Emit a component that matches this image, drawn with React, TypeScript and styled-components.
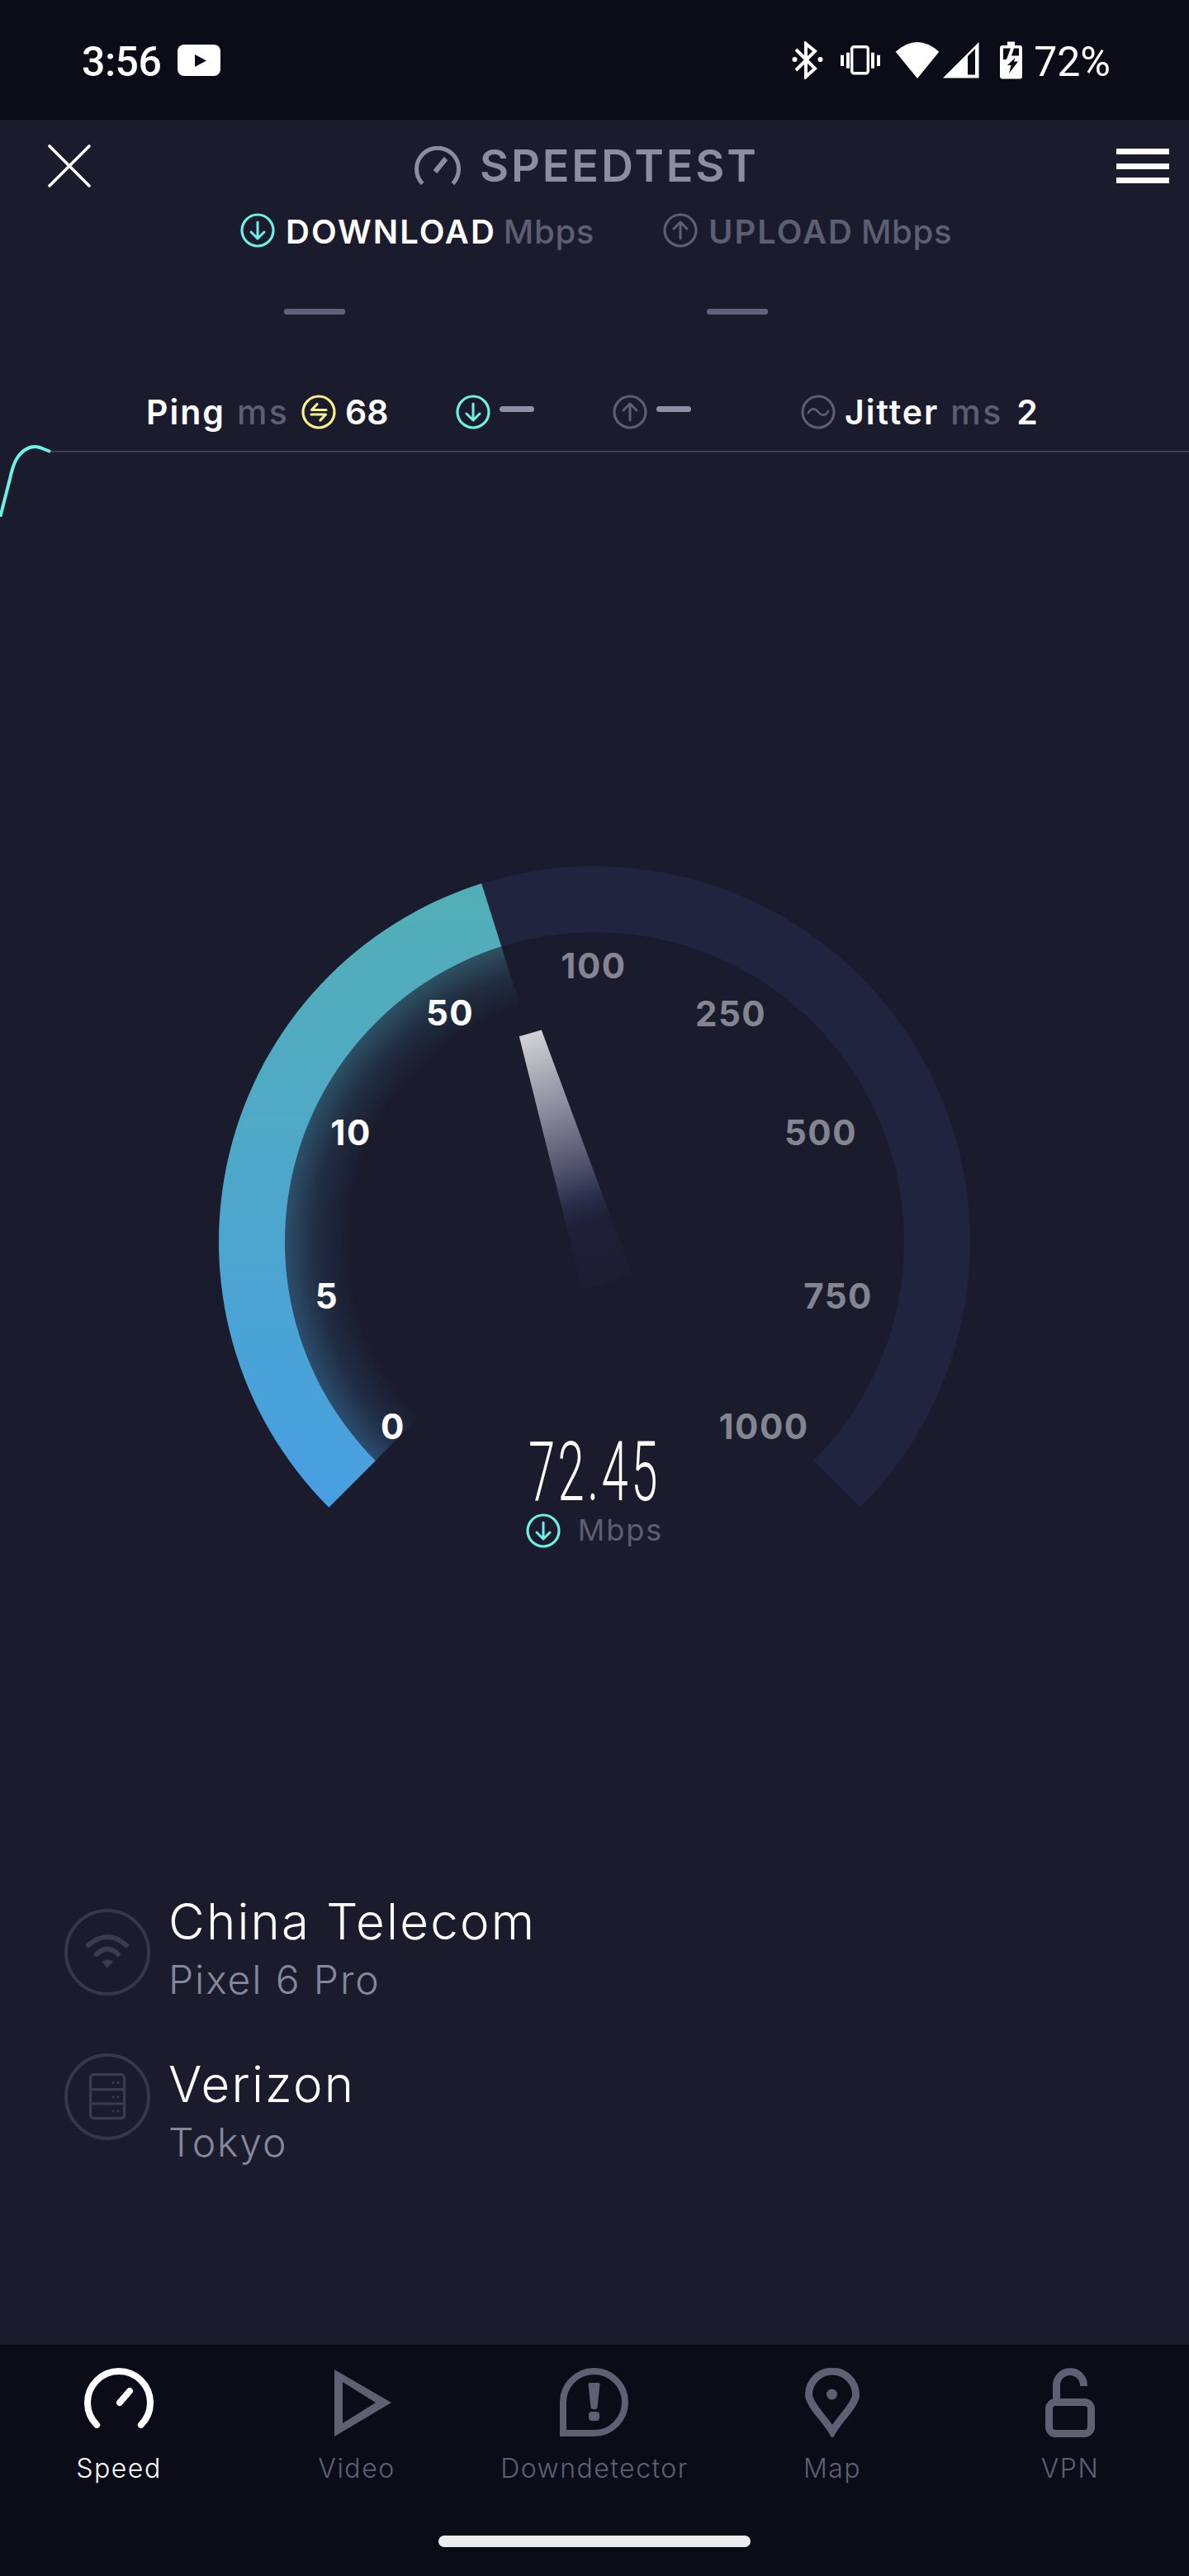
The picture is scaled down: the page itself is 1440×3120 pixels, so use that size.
import React from "react";
import styled, { createGlobalStyle } from "styled-components";

const Global = createGlobalStyle`
  html, body { margin: 0; padding: 0; background: #1a1c2e; }
  * { box-sizing: border-box; }
`;

const UI = `"Inter", "Noto Sans", sans-serif`;
const CLOCK = `"Roboto", "Liberation Sans", sans-serif`;
const MUTED = "#5c5e72";
const SOFT = "#8b8da0";
const NAV_OFF = "#5f6073";

const Page = styled.div`
  width: 1440px;
  height: 3120px;
  background: #1a1c2e;
  display: flex;
  flex-direction: column;
  font-family: ${UI};
  color: #fff;
  overflow: hidden;
`;

/* status bar */
const StatusBar = styled.header`
  height: 145px;
  flex: none;
  background: #0a0c18;
  display: flex;
  align-items: center;
  padding: 0 95px 0 99px;
`;
const Clock = styled.span`
  font: 500 50px/1 ${CLOCK};
  margin-top: 4px;
  letter-spacing: -0.5px;
`;
const StatusPercent = styled.span`
  font: 400 50px/1 ${CLOCK};
  margin-top: 4px;
  margin-left: 13px;
`;
const StatusRight = styled.div`
  margin-left: auto;
  display: flex;
  align-items: center;
`;
const StatusIcon = styled.svg<{ $gap?: number }>`
  display: block;
  flex: none;
  margin-left: ${(p) => p.$gap ?? 0}px;
`;

/* toolbar */
const Toolbar = styled.div`
  height: 112px;
  flex: none;
  display: grid;
  grid-template-columns: 444px auto 1fr;
  align-items: center;
  padding: 0 24px 0 58px;
`;
const TitleWrap = styled.div`
  display: flex;
  align-items: center;
  gap: 23px;
`;
const TitleText = styled.h1`
  margin: 0;
  font: 600 54px/1 ${UI};
  color: ${SOFT};
  letter-spacing: 2.9px;
`;
const MenuButton = styled.div`
  justify-self: end;
  width: 64px;
  display: flex;
  flex-direction: column;
  gap: 10.5px;
`;
const MenuBar = styled.span`
  display: block;
  height: 7px;
  background: #fff;
`;

/* tabs */
const Tabs = styled.div`
  display: grid;
  grid-template-columns: 512px 1fr;
  padding-left: 291px;
  height: 42px;
  flex: none;
`;
const Tab = styled.div`
  display: flex;
  align-items: center;
  gap: 13px;
`;
const TabLabel = styled.span<{ $on?: boolean }>`
  font: 600 40px/1 ${UI};
  letter-spacing: 2px;
  margin-top: 4px;
  color: ${(p) => (p.$on ? "#fff" : MUTED)};
  b {
    font-weight: 500;
    letter-spacing: 0.7px;
    color: ${MUTED};
    margin-left: 9px;
  }
`;
const CircleIcon = styled.svg`
  display: block;
  flex: none;
`;

const Dashes = styled.div`
  display: flex;
  gap: 438px;
  padding-left: 344px;
  margin-top: 75px;
  flex: none;
`;
const PendingDash = styled.span`
  display: block;
  width: 74px;
  height: 7px;
  border-radius: 3px;
  background: #62637a;
`;

/* stats */
const Stats = styled.div`
  display: grid;
  grid-template-columns: 375px 190px 228px 1fr;
  padding-left: 177px;
  margin-top: 97px;
  height: 42px;
  flex: none;
`;
const StatGroup = styled.div`
  display: flex;
  align-items: center;
`;
const StatName = styled.span<{ $gap?: number }>`
  font: 600 41px/1 ${UI};
  letter-spacing: 2px;
  color: #fff;
  margin-left: ${(p) => p.$gap ?? 0}px;
`;
const StatUnit = styled.span`
  font: 500 41px/1 ${UI};
  letter-spacing: 2.5px;
  color: ${MUTED};
  margin: 0 16px 0 14px;
  width: 62px;
`;
const StatValue = styled.span<{ $gap: number }>`
  font: 600 41px/1 ${UI};
  color: #fff;
  margin-left: ${(p) => p.$gap}px;
`;
const StatDash = styled.span`
  display: block;
  width: 42px;
  height: 7px;
  border-radius: 4px;
  background: #8f90a8;
  margin: -7px 0 0 11px;
`;

const GraphStrip = styled.svg`
  display: block;
  flex: none;
  margin-top: 10px;
`;

/* gauge */
const GaugeWrap = styled.section`
  position: relative;
  width: 960px;
  height: 810px;
  flex: none;
  margin: 404px auto 0;
`;
const GaugeSvg = styled.svg`
  display: block;
`;
const GaugeLabel = styled.text<{ $on?: boolean }>`
  font: 700 42px ${UI};
  letter-spacing: 1.5px;
  text-anchor: middle;
  fill: ${(p) => (p.$on ? "#fff" : "#848590")};
`;
const Readout = styled.div`
  position: absolute;
  left: 0;
  right: 0;
  top: 703px;
  display: flex;
  flex-direction: column;
  align-items: center;
`;
const ReadoutValue = styled.span`
  font: 300 100px/100px ${CLOCK};
  letter-spacing: 6px;
  transform: scaleX(0.58);
`;
const ReadoutUnit = styled.div`
  display: flex;
  align-items: center;
  gap: 21px;
`;
const ReadoutText = styled.span`
  font: 400 36px/1 ${UI};
  letter-spacing: 2px;
  color: ${MUTED};
  margin-top: -3px;
`;

/* connection info */
const Networks = styled.div`
  margin-top: 452px;
  padding-left: 78px;
  display: flex;
  flex-direction: column;
  gap: 55px;
  flex: none;
`;
const NetworkRow = styled.div`
  display: flex;
  align-items: flex-start;
  gap: 22px;
`;
const NetworkBadge = styled.svg<{ $top: number }>`
  display: block;
  flex: none;
  margin-top: ${(p) => p.$top}px;
`;
const NetworkText = styled.div`
  display: flex;
  flex-direction: column;
`;
const NetworkName = styled.span`
  font: 300 60px/70px ${UI};
  letter-spacing: 2.2px;
  color: #fff;
`;
const NetworkDetail = styled.span`
  font: 300 48px/72px ${UI};
  letter-spacing: 1.9px;
  color: #85879a;
`;

/* bottom nav */
const BottomNav = styled.nav`
  margin-top: auto;
  height: 280px;
  flex: none;
  background: #0a0c18;
  padding-top: 28px;
  display: flex;
  flex-direction: column;
`;
const NavItems = styled.div`
  display: grid;
  grid-template-columns: repeat(5, 1fr);
`;
const NavItem = styled.div`
  display: flex;
  flex-direction: column;
  align-items: center;
`;
const NavIcon = styled.svg`
  display: block;
  height: 84px;
  width: 100px;
`;
const NavLabel = styled.span<{ $on?: boolean }>`
  font: 300 32px/40px ${UI};
  letter-spacing: 1.5px;
  margin-top: 18px;
  color: ${(p) => (p.$on ? "#fff" : NAV_OFF)};
`;
const HomeBar = styled.div`
  width: 378px;
  height: 14px;
  border-radius: 7px;
  background: #ececec;
  margin: 61px auto 0;
`;

/* geometry */
const CX = 720;
const CY = 1504;
const polar = (r: number, deg: number) => {
  const a = (deg * Math.PI) / 180;
  return `${(CX + r * Math.sin(a)).toFixed(2)} ${(CY - r * Math.cos(a)).toFixed(2)}`;
};
const ring = (r0: number, r1: number, a: number, b: number) =>
  `M${polar(r1, a)} A${r1} ${r1} 0 0 1 ${polar(r1, b)} L${polar(r0, b)} A${r0} ${r0} 0 0 0 ${polar(r0, a)} Z`;

const START = -135;
const NOW = -17.5;
const END = 135;

const TICKS: { t: string; x: number; y: number; on?: boolean }[] = [
  { t: "0", x: 476, y: 1743, on: true },
  { t: "5", x: 396, y: 1585, on: true },
  { t: "10", x: 425, y: 1387, on: true },
  { t: "50", x: 545, y: 1242, on: true },
  { t: "100", x: 719, y: 1185 },
  { t: "250", x: 885, y: 1243 },
  { t: "500", x: 994, y: 1387 },
  { t: "750", x: 1015, y: 1585 },
  { t: "1000", x: 925, y: 1743 },
];

const ArrowCircle = ({ up, color, size = 42 }: { up?: boolean; color: string; size?: number }) => (
  <CircleIcon width={size} height={size} viewBox="0 0 42 42" fill="none" stroke={color}>
    <circle cx="21" cy="21" r="19" strokeWidth="3.2" />
    <g strokeWidth="3" strokeLinecap="round" strokeLinejoin="round">
      {up ? (
        <path d="M21 31V11M13 19l8-8 8 8" />
      ) : (
        <path d="M21 11v20M13 23l8 8 8-8" />
      )}
    </g>
  </CircleIcon>
);

const PingIcon = () => (
  <CircleIcon width={42} height={42} viewBox="0 0 42 42" fill="none" stroke="#fdf088" strokeLinecap="round" strokeLinejoin="round">
    <circle cx="21" cy="21" r="19" strokeWidth="3.2" />
    <path strokeWidth="3.2" d="M30 18.5H12.5L19 11.5M12 24H29.5L23 31" />
  </CircleIcon>
);

const JitterIcon = () => (
  <CircleIcon width={42} height={42} viewBox="0 0 42 42" fill="none" stroke={MUTED}>
    <circle cx="21" cy="21" r="19" strokeWidth="3" />
    <path strokeWidth="2.6" strokeLinecap="round" d="M9 22c3-6 8-6 12-1s9 5 12-1" />
  </CircleIcon>
);

const App = () => (
  <Page>
    <Global />
    <StatusBar>
      <Clock>3:56</Clock>
      <StatusIcon $gap={20} width={52} height={38} viewBox="214 54 52 38">
        <rect x="214" y="54" width="52" height="38" rx="8" fill="#fff" />
        <path d="M235 66 L249 73.5 L235 81 Z" fill="#0a0c18" />
      </StatusIcon>
      <StatusRight>
        <StatusIcon width={38} height={46} viewBox="957 50 38 46">
          <path d="M962 60 L985 83 L974 93 V53 L985 62 L962 85" fill="none" stroke="#fff" strokeWidth="4" />
          <circle cx="960.5" cy="72" r="3" fill="#fff" />
          <circle cx="991.5" cy="72" r="3" fill="#fff" />
        </StatusIcon>
        <StatusIcon $gap={20} width={49} height={36} viewBox="1015 54 49 36" fill="#fff">
          <rect x="1029.7" y="55.7" width="19.6" height="32" rx="2.5" fill="none" stroke="#fff" strokeWidth="3.4" />
          <rect x="1016" y="65.7" width="4" height="13.3" />
          <rect x="1023" y="62.7" width="4" height="19" />
          <rect x="1053" y="62.7" width="4" height="19" />
          <rect x="1060" y="65.7" width="4" height="13.3" />
        </StatusIcon>
        <StatusIcon $gap={18} width={54} height={44} viewBox="1082 50 54 44">
          <path d="M1082.7 61.7 Q1109 38.3 1135.3 61.7 L1109 94 Z" fill="#fff" />
        </StatusIcon>
        <StatusIcon $gap={3} width={45} height={44} viewBox="1139 51 45 44">
          <path fillRule="evenodd" d="M1140 94.5 L1183.5 51 V94.5 Z M1170 68 V90.5 H1179 V59 Z" fill="#fff" />
        </StatusIcon>
        <StatusIcon $gap={25} width={28} height={46} viewBox="1209 50 28 46">
          <path d="M1218 50.5 H1227 V55 H1233 Q1236 55 1236 58 V92 Q1236 95.5 1233 95.5 H1212 Q1209 95.5 1209 92 V58 Q1209 55 1212 55 H1218 Z" fill="#fff" />
          <g fill="#0a0c18">
            <path d="M1213 58.5 H1222 L1217 72 H1213 Z" />
            <path d="M1226 58.5 H1232 V67.5 H1223 Z" />
            <path d="M1227.5 70 L1218 79 H1222.5 L1220 89 L1231 74.5 H1226 Z" />
          </g>
        </StatusIcon>
        <StatusPercent>72%</StatusPercent>
      </StatusRight>
    </StatusBar>

    <Toolbar>
      <StatusIcon width={52} height={52} viewBox="0 0 52 52">
        <path d="M2 2 L50 50 M50 2 L2 50" stroke="#fff" strokeWidth="3.6" strokeLinecap="round" />
      </StatusIcon>
      <TitleWrap>
        <StatusIcon width={56} height={48} viewBox="502 173 56 48" fill="none" stroke={SOFT}>
          <path d="M511.6 218.4 A25.5 25.5 0 1 1 548.4 218.4" strokeWidth="5" />
          <path d="M527 204 L540 188" strokeWidth="6" />
        </StatusIcon>
        <TitleText>SPEEDTEST</TitleText>
      </TitleWrap>
      <MenuButton>
        <MenuBar />
        <MenuBar />
        <MenuBar />
      </MenuButton>
    </Toolbar>

    <Tabs>
      <Tab>
        <ArrowCircle color="#6ef0e5" />
        <TabLabel $on>
          DOWNLOAD<b>Mbps</b>
        </TabLabel>
      </Tab>
      <Tab>
        <ArrowCircle up color={MUTED} />
        <TabLabel>
          UPLOAD<b>Mbps</b>
        </TabLabel>
      </Tab>
    </Tabs>

    <Dashes>
      <PendingDash />
      <PendingDash />
    </Dashes>

    <Stats>
      <StatGroup>
        <StatName>Ping</StatName>
        <StatUnit>ms</StatUnit>
        <PingIcon />
        <StatValue $gap={11}>68</StatValue>
      </StatGroup>
      <StatGroup>
        <ArrowCircle color="#6ef0e5" />
        <StatDash />
      </StatGroup>
      <StatGroup>
        <ArrowCircle up color={MUTED} />
        <StatDash />
      </StatGroup>
      <StatGroup>
        <JitterIcon />
        <StatName $gap={11}>Jitter</StatName>
        <StatUnit>ms</StatUnit>
        <StatValue $gap={2}>2</StatValue>
      </StatGroup>
    </Stats>

    <GraphStrip width={1440} height={96} viewBox="0 530 1440 96" fill="none">
      <path d="M60 546.8 H1440" stroke="#4a4b5c" strokeWidth="1.6" />
      <path
        d="M0 627 L12 580 C16 562 20 552 30 545 C36 541 42 540 48 542 L61 547"
        stroke="#6ef0e5"
        strokeWidth="4"
      />
    </GraphStrip>

    <GaugeWrap>
      <GaugeSvg width={960} height={810} viewBox="240 1030 960 810">
        <defs>
          <linearGradient id="sweep" gradientUnits="userSpaceOnUse" x1="0" y1="1060" x2="0" y2="1830">
            <stop offset="0" stopColor="#53afb5" />
            <stop offset="1" stopColor="#479fe2" />
          </linearGradient>
          <radialGradient id="glowFade" gradientUnits="userSpaceOnUse" cx={CX} cy={CY} r="376">
            <stop offset="0.79" stopColor="#fff" stopOpacity="0" />
            <stop offset="0.9" stopColor="#fff" stopOpacity="0.13" />
            <stop offset="1" stopColor="#fff" stopOpacity="0.38" />
          </radialGradient>
          <mask id="glowMask" maskUnits="userSpaceOnUse" x="240" y="1030" width="960" height="810">
            <rect x="240" y="1030" width="960" height="810" fill="url(#glowFade)" />
          </mask>
          <linearGradient id="needle" gradientUnits="userSpaceOnUse" x1="642" y1="1251" x2="735" y2="1553">
            <stop offset="0" stopColor="#d2d2d6" />
            <stop offset="0.3" stopColor="#8c8d9d" />
            <stop offset="0.55" stopColor="#4d5068" />
            <stop offset="0.67" stopColor="#2a2e4c" />
            <stop offset="0.76" stopColor="#1e2036" />
            <stop offset="1" stopColor="#1c1e32" />
          </linearGradient>
        </defs>
        <path d={ring(375, 455, NOW, END)} fill="#20243f" />
        <path d={ring(298, 376, START, NOW)} fill="url(#sweep)" mask="url(#glowMask)" />
        <path d={ring(375, 455, START, NOW)} fill="url(#sweep)" />
        <path d="M628.8 1255.3 L655.8 1247.6 L765.5 1544 L705.3 1562.4 Z" fill="url(#needle)" />
        {TICKS.map((k) => (
          <GaugeLabel key={k.t} x={k.x} y={k.y} $on={k.on}>
            {k.t}
          </GaugeLabel>
        ))}
      </GaugeSvg>
      <Readout>
        <ReadoutValue>72.45</ReadoutValue>
        <ReadoutUnit>
          <ArrowCircle color="#6ef0e5" />
          <ReadoutText>Mbps</ReadoutText>
        </ReadoutUnit>
      </Readout>
    </GaugeWrap>

    <Networks>
      <NetworkRow>
        <NetworkBadge $top={20} width={104} height={105} viewBox="78 2312 104 105" fill="none">
          <ellipse cx="130" cy="2364.5" rx="50" ry="50.5" stroke="#35374a" strokeWidth="4" />
          <g stroke="#393b4e" strokeWidth="6" strokeLinecap="round">
            <path d="M107 2356 Q130 2336 153 2356" />
            <path d="M117 2367 Q130 2354 143 2367" />
          </g>
          <path d="M123 2376 Q130 2371 137 2376 L130 2383.5 Z" fill="#393b4e" />
        </NetworkBadge>
        <NetworkText>
          <NetworkName>China Telecom</NetworkName>
          <NetworkDetail>Pixel 6 Pro</NetworkDetail>
        </NetworkText>
      </NetworkRow>
      <NetworkRow>
        <NetworkBadge $top={-2} width={104} height={105} viewBox="78 2487 104 105" fill="none">
          <ellipse cx="130" cy="2539.5" rx="50" ry="50.5" stroke="#35374a" strokeWidth="4" />
          <g stroke="#393b4e" strokeWidth="3.2">
            <rect x="109.6" y="2512.6" width="41" height="53" rx="4" />
            <path d="M110 2530.6 H150 M110 2548 H150" />
          </g>
          <g fill="#393b4e">
            <circle cx="137" cy="2522.7" r="1.6" />
            <circle cx="143" cy="2522.7" r="1.6" />
            <circle cx="137" cy="2540" r="1.6" />
            <circle cx="143" cy="2540" r="1.6" />
            <circle cx="137" cy="2557" r="1.6" />
            <circle cx="143" cy="2557" r="1.6" />
          </g>
        </NetworkBadge>
        <NetworkText>
          <NetworkName>Verizon</NetworkName>
          <NetworkDetail>Tokyo</NetworkDetail>
        </NetworkText>
      </NetworkRow>
    </Networks>

    <BottomNav>
      <NavItems>
        <NavItem>
          <NavIcon viewBox="94 2868 100 84" fill="none" stroke="#fff" strokeWidth="8" strokeLinecap="round">
            <path d="M117.2 2937 A38 38 0 1 1 170.8 2937" />
            <path d="M145 2910 L157 2896" />
          </NavIcon>
          <NavLabel $on>Speed</NavLabel>
        </NavItem>
        <NavItem>
          <NavIcon viewBox="382 2868 100 84">
            <path fillRule="evenodd" d="M405 2870 L474 2910 L405 2951 Z M415 2885 V2935 L455 2910 Z" fill={NAV_OFF} />
          </NavIcon>
          <NavLabel>Video</NavLabel>
        </NavItem>
        <NavItem>
          <NavIcon viewBox="670 2868 100 84" fill="none">
            <path d="M682 2947 V2910 A37.5 37.5 0 1 1 719.5 2947 Z" stroke={NAV_OFF} strokeWidth="8" />
            <path d="M712.5 2888 Q712 2886 715 2886 H724 Q727 2886 726.5 2888 L723.5 2916 Q723 2918 721 2918 H718 Q716 2918 715.5 2916 Z" fill={NAV_OFF} />
            <rect x="713" y="2921" width="13" height="11" rx="4" fill={NAV_OFF} />
          </NavIcon>
          <NavLabel>Downdetector</NavLabel>
        </NavItem>
        <NavItem>
          <NavIcon viewBox="958 2868 100 84" fill="none">
            <path
              d="M1008 2945 C1000 2931 979.5 2912 979.5 2900.5 A28.5 28.5 0 0 1 1036.5 2900.5 C1036.5 2912 1016 2931 1008 2945 Z"
              stroke={NAV_OFF}
              strokeWidth="9"
            />
            <ellipse cx="1007.5" cy="2900" rx="6.5" ry="6.5" fill={NAV_OFF} />
          </NavIcon>
          <NavLabel>Map</NavLabel>
        </NavItem>
        <NavItem>
          <NavIcon viewBox="1246 2868 100 84" fill="none" stroke={NAV_OFF} strokeWidth="9">
            <rect x="1270.5" y="2909.5" width="51" height="38" rx="8" />
            <path d="M1279.5 2906 V2889 A16.5 16.5 0 0 1 1312.5 2889 V2890" />
          </NavIcon>
          <NavLabel>VPN</NavLabel>
        </NavItem>
      </NavItems>
      <HomeBar />
    </BottomNav>
  </Page>
);

export default App;
